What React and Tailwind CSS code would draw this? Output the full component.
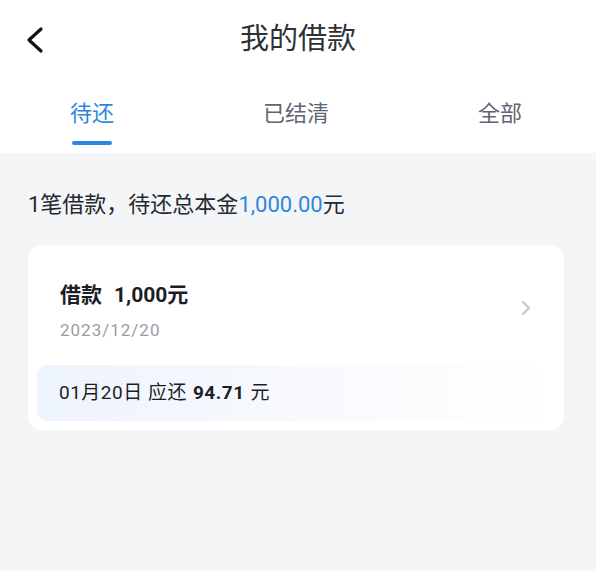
import React from "react";

const font = { fontFamily: 'Roboto, "Noto Sans CJK SC", sans-serif' };

function Tabs() {
  const tabs = ["待还", "已结清", "全部"];
  return (
    <div className="flex justify-between pl-[70px] pr-[74px] pt-[22px] pb-[8px]">
      {tabs.map((t, i) => (
        <div key={t} className="flex flex-col items-center">
          <span
            className={`text-[22px] leading-[24px] ${i === 0 ? "text-[#2f86e0]" : "text-[#5f6672]"}`}
          >
            {t}
          </span>
          <span
            className={`mt-[15px] h-[4px] w-[40px] rounded-full ${i === 0 ? "bg-[#2f86e0]" : "bg-transparent"}`}
          />
        </div>
      ))}
    </div>
  );
}

function LoanCard() {
  return (
    <div className="ml-[28px] w-[536px] rounded-[14px] bg-white pt-[36px] pb-[9px]">
      <div className="flex items-center pl-[32px] pr-[32px]">
        <div className="flex-1">
          <div className="text-[21px] leading-[28px] font-bold text-[#1b1e24]">
            借款<span className="ml-[12px]">1,000元</span>
          </div>
          <div className="mt-[10px] text-[17px] leading-[22px] tracking-[1px] text-[#9a9ca3]">
            2023/12/20
          </div>
        </div>
        <svg width="12" height="16" viewBox="0 0 12 16" className="mt-[-6px]">
          <polyline
            points="3,2 9,8 3,14"
            fill="none"
            stroke="#c9cbd0"
            strokeWidth="2.4"
            strokeLinecap="round"
            strokeLinejoin="round"
          />
        </svg>
      </div>
      <div className="mx-[9px] mt-[24px] flex h-[56px] items-center rounded-[10px] bg-gradient-to-r from-[#eef4fd] via-[#f7f9fd] to-[#ffffff] pl-[22px] text-[19px] tracking-[0.5px] text-[#1b1e24]">
        01月20日 应还<span className="ml-[6px] font-bold">94.71</span>
        <span className="ml-[6px]">元</span>
      </div>
    </div>
  );
}

export default function App() {
  return (
    <div className="h-[571px] w-[596px] bg-[#f4f5f7]" style={font}>
      <div className="bg-white">
        <div className="relative flex h-[80px] items-center justify-center">
          <svg
            width="20"
            height="28"
            viewBox="0 0 20 28"
            className="absolute left-[25px] top-[26px]"
          >
            <polyline
              points="16,3 4,14 16,25"
              fill="none"
              stroke="#111"
              strokeWidth="3.2"
              strokeLinecap="round"
              strokeLinejoin="round"
            />
          </svg>
          <span className="text-[29px] text-[#2e3035]">我的借款</span>
        </div>
        <Tabs />
      </div>
      <div className="pt-[38px] pl-[28px] text-[22px] leading-[28px] text-[#252a31]">
        1笔借款，待还总本金<span className="text-[#2f86e0]">1,000.00</span>元
      </div>
      <div className="mt-[26px]">
        <LoanCard />
      </div>
    </div>
  );
}
